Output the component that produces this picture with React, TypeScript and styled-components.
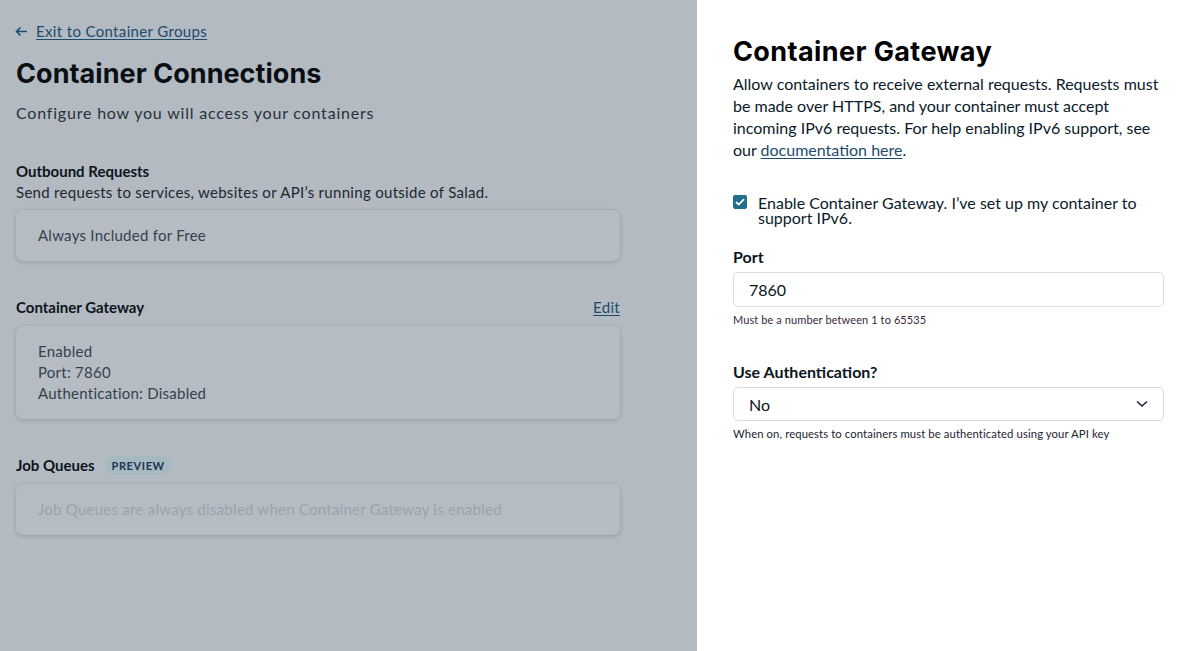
import styled, { createGlobalStyle } from 'styled-components'

const GlobalStyle = createGlobalStyle`
  html, body {
    margin: 0;
    padding: 0;
    height: 100%;
    overflow: hidden;
  }
  body {
    font-family: Lato, "Noto Sans", Arial, sans-serif;
    color: #0b1520;
  }
`

const Page = styled.div`
  display: grid;
  grid-template-columns: 697px 1fr;
  width: 100vw;
  height: 100vh;
`

const Backdrop = styled.div`
  background: #b3bac2;
  padding: 22px 77px 0 16px;
  display: flex;
  flex-direction: column;
`

const BackLink = styled.a`
  display: flex;
  align-items: center;
  gap: 8px;
  color: #1d4b6d;
  font-size: 15px;
  letter-spacing: 0.35px;
  text-decoration: underline;
  text-underline-offset: 2px;
  margin-left: -1px;
  cursor: pointer;
`

const PageTitle = styled.h1`
  font-family: Inter, "Noto Sans", sans-serif;
  font-weight: 700;
  font-size: 27px;
  letter-spacing: 0.05px;
  color: #0a0f14;
  margin: 17px 0 0;
  line-height: 34px;
`

const Subtitle = styled.p`
  margin: 12px 0 0;
  font-size: 16px;
  color: #28313a;
  letter-spacing: 0.8px;
`

const Section = styled.section<{ $gap: number }>`
  margin-top: ${(p) => p.$gap}px;
  display: flex;
  flex-direction: column;
`

const SectionHead = styled.div`
  display: flex;
  align-items: center;
  justify-content: space-between;
  height: 20px;
`

const SectionTitle = styled.h3`
  margin: 0;
  font-size: 15px;
  font-weight: 700;
  color: #0d141b;
  display: flex;
  align-items: center;
  gap: 10px;
`

const Badge = styled.span`
  background: #a6b9c1;
  color: #1c3456;
  font-size: 11px;
  font-weight: 700;
  letter-spacing: 0.6px;
  padding: 3px 7px;
  border-radius: 10px;
`

const EditLink = styled.a`
  color: #1d4b6d;
  font-size: 15px;
  letter-spacing: 0.3px;
  text-decoration: underline;
  text-underline-offset: 2px;
`

const SectionDesc = styled.p`
  margin: 2px 0 0;
  font-size: 15px;
  letter-spacing: 0.3px;
  color: #1e262e;
`

const Card = styled.div<{ $muted?: boolean }>`
  margin-top: 9px;
  background: #b5bcc4;
  border-radius: 7px;
  box-shadow: 0 1px 4px rgba(40, 50, 62, 0.22);
  padding: 15px 22px;
  font-size: 15px;
  letter-spacing: 0.25px;
  line-height: 21px;
  color: ${(p) => (p.$muted ? '#9aa3ad' : '#36414c')};
`

const Drawer = styled.aside`
  background: #ffffff;
  padding: 36px 27px 0 36px;
  display: flex;
  flex-direction: column;
`

const DrawerTitle = styled.h2`
  font-family: Inter, "Noto Sans", sans-serif;
  font-weight: 700;
  font-size: 27px;
  letter-spacing: 0.4px;
  color: #000;
  margin: 0;
  line-height: 32px;
`

const Intro = styled.p`
  margin: 5px 0 0;
  font-size: 16px;
  line-height: 22px;
  color: #0b1a29;
  padding-right: 4px;

  a {
    color: #1d4b6d;
    text-decoration: underline;
    text-underline-offset: 2px;
  }
`

const CheckRow = styled.label`
  margin-top: 34px;
  display: flex;
  align-items: flex-start;
  gap: 11px;
  font-size: 16px;
  line-height: 15px;
  color: #0b1a29;
  padding-right: 10px;
`

const CheckBox = styled.span`
  flex: none;
  width: 14px;
  height: 14px;
  border-radius: 2px;
  background: #1f6e8c;
  display: flex;
  align-items: center;
  justify-content: center;
`

const FieldLabel = styled.div<{ $gap: number }>`
  margin-top: ${(p) => p.$gap}px;
  font-size: 16px;
  font-weight: 700;
  color: #0b1520;
  line-height: 20px;
`

const InputBox = styled.div<{ $h: number }>`
  margin-top: 5px;
  height: ${(p) => p.$h}px;
  box-sizing: border-box;
  border: 1px solid #d6dce2;
  border-radius: 5px;
  padding: 0 15px;
  display: flex;
  align-items: center;
  justify-content: space-between;
  font-size: 16px;
  color: #0b1520;
`

const Help = styled.div<{ $tone?: string; $size?: number }>`
  margin-top: 6px;
  font-size: ${(p) => p.$size ?? 11}px;
  letter-spacing: 0.1px;
  color: ${(p) => p.$tone ?? '#1c2530'};
`

function ArrowLeft() {
  return (
    <svg width="13" height="11" viewBox="0 0 13 11" fill="none" stroke="#1d4b6d" strokeWidth="1.6">
      <path d="M12 5.5H1.5M5.5 1.5L1.5 5.5L5.5 9.5" />
    </svg>
  )
}

function Chevron() {
  return (
    <svg width="12" height="8" viewBox="0 0 12 8" fill="none" stroke="#1b2735" strokeWidth="1.6">
      <path d="M1 1.5L6 6L11 1.5" />
    </svg>
  )
}

export default function App() {
  return (
    <>
      <GlobalStyle />
      <Page>
        <Backdrop>
          <BackLink>
            <ArrowLeft />
            Exit to Container Groups
          </BackLink>
          <PageTitle>Container Connections</PageTitle>
          <Subtitle>Configure how you will access your containers</Subtitle>

          <Section $gap={39}>
            <SectionHead>
              <SectionTitle>Outbound Requests</SectionTitle>
            </SectionHead>
            <SectionDesc>Send requests to services, websites or API’s running outside of Salad.</SectionDesc>
            <Card>Always Included for Free</Card>
          </Section>

          <Section $gap={36}>
            <SectionHead>
              <SectionTitle>Container Gateway</SectionTitle>
              <EditLink>Edit</EditLink>
            </SectionHead>
            <Card>
              Enabled
              <br />
              Port: 7860
              <br />
              Authentication: Disabled
            </Card>
          </Section>

          <Section $gap={36}>
            <SectionHead>
              <SectionTitle>
                Job Queues <Badge>PREVIEW</Badge>
              </SectionTitle>
            </SectionHead>
            <Card $muted>Job Queues are always disabled when Container Gateway is enabled</Card>
          </Section>
        </Backdrop>

        <Drawer>
          <DrawerTitle>Container Gateway</DrawerTitle>
          <Intro>
            Allow containers to receive external requests. Requests must be made over HTTPS, and your container must
            accept incoming IPv6 requests. For help enabling IPv6 support, see our <a>documentation here</a>.
          </Intro>

          <CheckRow>
            <CheckBox>
              <svg width="10" height="8" viewBox="0 0 10 8" fill="none" stroke="#fff" strokeWidth="1.8">
                <path d="M1 4L3.8 6.6L9 1.2" />
              </svg>
            </CheckBox>
            <span>Enable Container Gateway. I’ve set up my container to support IPv6.</span>
          </CheckRow>

          <FieldLabel $gap={22}>Port</FieldLabel>
          <InputBox $h={35}>7860</InputBox>
          <Help $tone="#3b1f3c">Must be a number between 1 to 65535</Help>

          <FieldLabel $gap={36}>Use Authentication?</FieldLabel>
          <InputBox $h={34}>
            No
            <Chevron />
          </InputBox>
          <Help $size={11.3}>When on, requests to containers must be authenticated using your API key</Help>
        </Drawer>
      </Page>
    </>
  )
}
